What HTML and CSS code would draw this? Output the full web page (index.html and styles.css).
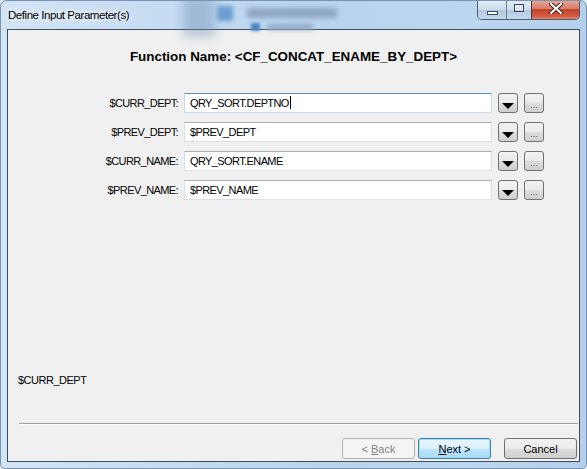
FILE: index.html
```html
<!DOCTYPE html>
<html>
<head>
    <title>Define Input Parameter(s)</title>
    <link rel="stylesheet" href="styles.css">
</head>
<body>
    <div class="window">
        <div class="titlebar">
            <div class="backdrop">
                <span class="bd-band"></span>
                <span class="bd-icon"></span>
                <span class="bd-text"></span>
                <span class="bd-icon2"></span>
                <span class="bd-text2"></span>
            </div>
            <span class="title">Define Input Parameter(s)</span>
            <div class="caption">
                <span class="cap cap-min">
                    <svg width="11" height="4" viewBox="0 0 11 4"><rect x="0.5" y="0.5" width="10" height="3" fill="#fff" stroke="#3a4a60"/></svg>
                </span>
                <span class="cap cap-max">
                    <svg width="10" height="8" viewBox="0 0 10 8"><rect x="0.5" y="0.5" width="9" height="7" fill="none" stroke="#3a4a60"/><rect x="2" y="2.5" width="6" height="3" fill="none" stroke="#fff"/></svg>
                </span>
                <span class="cap cap-close">
                    <svg width="14" height="11" viewBox="0 0 14 11"><path d="M2 1 L12 10 M12 1 L2 10" stroke="#4a1a14" stroke-width="4" stroke-linecap="round"/><path d="M2 1 L12 10 M12 1 L2 10" stroke="#fff" stroke-width="2.2" stroke-linecap="round"/></svg>
                </span>
            </div>
        </div>

        <div class="client">
            <h1 class="fn-name">Function Name: &lt;CF_CONCAT_ENAME_BY_DEPT&gt;</h1>

            <div class="params">
                <label>$CURR_DEPT:</label>
                <div class="field focused">QRY_SORT.DEPTNO<span class="caret"></span></div>
                <button class="drop"><svg width="12" height="6" viewBox="0 0 12 6"><path d="M0 0 H12 L6 6 Z" fill="#000"/></svg></button>
                <button class="more">...</button>

                <label>$PREV_DEPT:</label>
                <div class="field">$PREV_DEPT</div>
                <button class="drop"><svg width="12" height="6" viewBox="0 0 12 6"><path d="M0 0 H12 L6 6 Z" fill="#000"/></svg></button>
                <button class="more">...</button>

                <label>$CURR_NAME:</label>
                <div class="field">QRY_SORT.ENAME</div>
                <button class="drop"><svg width="12" height="6" viewBox="0 0 12 6"><path d="M0 0 H12 L6 6 Z" fill="#000"/></svg></button>
                <button class="more">...</button>

                <label>$PREV_NAME:</label>
                <div class="field">$PREV_NAME</div>
                <button class="drop"><svg width="12" height="6" viewBox="0 0 12 6"><path d="M0 0 H12 L6 6 Z" fill="#000"/></svg></button>
                <button class="more">...</button>
            </div>

            <div class="status">$CURR_DEPT</div>
            <div class="sep"></div>

            <div class="nav">
                <button class="btn disabled">&lt; <u>B</u>ack</button>
                <button class="btn default"><u>N</u>ext &gt;</button>
                <button class="btn cancel">Cancel</button>
            </div>
        </div>
    </div>
</body>
</html>
```

FILE: styles.css
```css
body {
    margin: 0;
    background-color: #dfe7ef;
    font-family: "Liberation Sans", Arial, sans-serif;
}

.window {
    width: 587px;
    height: 469px;
    box-sizing: border-box;
    display: flex;
    flex-direction: column;
    border: 1px solid #7994b3;
    border-radius: 7px 7px 5px 5px;
    background: linear-gradient(to right, #d3e4f5 0%, #c4dbf1 30%, #b9d4ef 55%, #bdd6ef 80%, #b3cfec 100%);
    overflow: hidden;
}

/* title bar */

.titlebar {
    position: relative;
    height: 28px;
    display: flex;
    align-items: flex-start;
}

.backdrop span {
    position: absolute;
    display: block;
}

.bd-band {
    left: 182px;
    top: -4px;
    width: 32px;
    height: 40px;
    background-color: rgba(110, 140, 180, 0.4);
    filter: blur(5px);
}

.bd-icon {
    left: 216px;
    top: 5px;
    width: 16px;
    height: 15px;
    background-color: #6a9dd0;
    filter: blur(2px);
}

.bd-text {
    left: 246px;
    top: 7px;
    width: 90px;
    height: 10px;
    background-color: #8ea6c2;
    filter: blur(2.5px);
}

.bd-icon2 {
    left: 250px;
    top: 22px;
    width: 9px;
    height: 8px;
    background-color: #4f87c2;
    filter: blur(1.5px);
}

.bd-text2 {
    left: 266px;
    top: 23px;
    width: 46px;
    height: 6px;
    background-color: #94abc6;
    filter: blur(2px);
}

.title {
    position: relative;
    margin: 8px 0 0 7px;
    font-size: 11.5px;
    letter-spacing: -0.45px;
    color: #000;
    text-shadow: 0 0 6px #fff, 0 0 6px #fff;
}

.caption {
    position: relative;
    margin-left: auto;
    margin-right: 6px;
    display: flex;
    height: 19px;
    margin-top: -1px;
    border: 1px solid #4b5d74;
    border-top: none;
    border-radius: 0 0 5px 5px;
    overflow: hidden;
}

.cap {
    display: flex;
    align-items: center;
    justify-content: center;
    height: 100%;
}

.cap-min {
    width: 29px;
    padding-top: 7px;
    box-sizing: border-box;
    border-right: 1px solid #6d7f96;
    background: linear-gradient(#e4edf7, #ccdcec 50%, #b2c8e0 51%, #c5d8ec);
}

.cap-max {
    width: 25px;
    padding-bottom: 3px;
    box-sizing: border-box;
    border-right: 1px solid #6d2a20;
    background: linear-gradient(#e4edf7, #ccdcec 50%, #b2c8e0 51%, #c5d8ec);
}

.cap-close {
    width: 47px;
    padding-bottom: 3px;
    box-sizing: border-box;
    background: linear-gradient(#e9a898, #d7806c 45%, #c4422c 50%, #d35a40 85%, #e2866a);
}

/* client area */

.client {
    flex: 1;
    margin: 0 6px 6px 6px;
    border: 1px solid #3f4d5e;
    background-color: #f0f0f0;
    display: flex;
    flex-direction: column;
}

.fn-name {
    margin: 19px 0 0 0;
    font-size: 13.4px;
    line-height: 16px;
    text-align: center;
    color: #000;
}

.params {
    display: grid;
    grid-template-columns: 170px 308px 20px 20px;
    grid-auto-rows: 20px;
    column-gap: 6px;
    row-gap: 9px;
    margin-top: 28px;
    font-size: 11px;
    letter-spacing: -0.6px;
}

.params label {
    text-align: right;
    line-height: 20px;
    color: #000;
}

.field {
    box-sizing: border-box;
    height: 20px;
    padding: 0 5px;
    line-height: 18px;
    background-color: #fff;
    border: 1px solid #dbdfe6;
    border-top-color: #abadb3;
    color: #000;
    white-space: nowrap;
}

.field.focused {
    border-color: #c5daed;
    border-top-color: #5794bf;
}

.caret {
    display: inline-block;
    width: 1px;
    height: 13px;
    margin-left: 1px;
    vertical-align: -2px;
    background-color: #000;
}

.drop,
.more {
    box-sizing: border-box;
    width: 20px;
    height: 20px;
    padding: 0;
    border: 1px solid #707070;
    border-radius: 3px;
    background: linear-gradient(#f2f2f2, #ebebeb 50%, #dddddd 51%, #cfcfcf);
    display: flex;
    justify-content: center;
}

.drop {
    align-items: flex-end;
    padding-bottom: 3px;
}

.more {
    align-items: flex-end;
    padding-bottom: 2px;
    font-family: "Liberation Sans", Arial, sans-serif;
    font-size: 9px;
    line-height: 10px;
    letter-spacing: 0;
    color: #5e4c44;
}

.status {
    margin: auto 0 0 10px;
    font-size: 11px;
    line-height: 14px;
    letter-spacing: -0.5px;
    color: #000;
}

.sep {
    height: 1px;
    margin: 36px 1px 0 11px;
    background-color: #a0a0a0;
    border-bottom: 1px solid #fff;
}

.nav {
    display: flex;
    justify-content: flex-end;
    margin: 13px 2px 2px 0;
}

.btn {
    box-sizing: border-box;
    width: 73px;
    height: 21px;
    padding: 0;
    border: 1px solid #707070;
    border-radius: 3px;
    background: linear-gradient(#f2f2f2, #ebebeb 50%, #dddddd 51%, #cfcfcf);
    font-family: "Liberation Sans", Arial, sans-serif;
    font-size: 11px;
    color: #000;
}

.btn.disabled {
    border-color: #adb2b5;
    background: #f4f4f4;
    color: #838383;
}

.btn.default {
    margin-left: 3px;
    border-color: #3c7fb1;
    box-shadow: inset 0 0 0 1px #a6dbf5;
    background: linear-gradient(#eaf6fd, #d9f0fc 50%, #bee6fd 51%, #a7d9f5);
}

.btn.cancel {
    margin-left: 13px;
}
```
